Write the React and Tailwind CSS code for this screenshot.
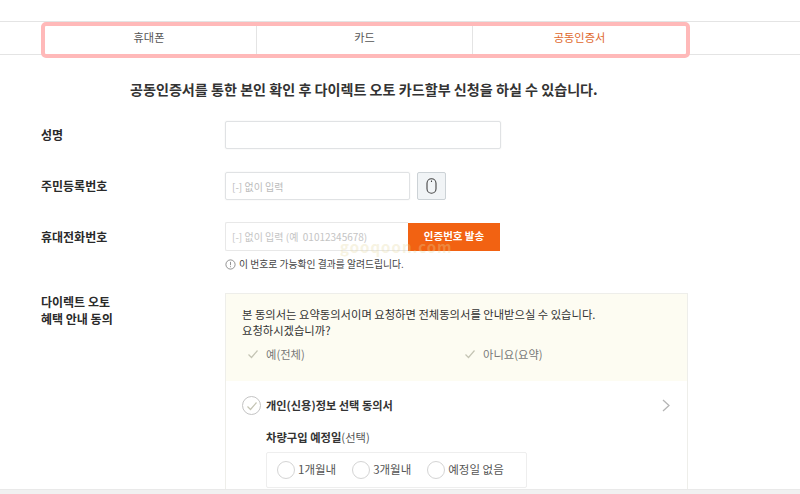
const font = { fontFamily: '"Noto Sans CJK KR", "Noto Sans", sans-serif' };

function Check() {
  return (
    <svg width="12" height="10" viewBox="0 0 12 10" fill="none" stroke="#c4c4b4" strokeWidth="1.2">
      <path d="M1.5 5.5 L4.5 8.5 L10.5 1.5" />
    </svg>
  );
}

function Radio({ label }) {
  return (
    <div className="flex items-center gap-[3px]">
      <span className="w-[18px] h-[18px] rounded-full border border-[#d4d4d4] bg-white" />
      <span className="text-[11.5px] text-[#555] leading-none whitespace-nowrap">{label}</span>
    </div>
  );
}

function Label({ children, className = "" }) {
  return <div className={`w-[184px] shrink-0 text-[12px] font-bold text-[#2a2a2a] ${className}`}>{children}</div>;
}

export default function App() {
  return (
    <div className="relative w-[800px] h-[494px] overflow-hidden bg-white" style={font}>
      <div className="h-[21px]" />
      <div className="relative h-[34px] border-y border-[#e4e4e4]">
        <div className="flex h-full ml-[44px] w-[642px] text-[11.2px] text-[#555] leading-none">
          <div className="w-[213px] flex items-center justify-center border-r border-[#e4e4e4] pr-[2px]">휴대폰</div>
          <div className="w-[216px] flex items-center justify-center border-r border-[#e4e4e4]">카드</div>
          <div className="flex-1 flex items-center justify-center text-[#e0682c]">공동인증서</div>
        </div>
        <div className="absolute left-[41px] top-[0px] w-[649px] h-[36px] border-4 border-[#ffb9b9] rounded-[5px] pointer-events-none" />
      </div>

      <h1 className="mt-[24px] ml-[130px] text-[14.1px] font-bold text-[#333] leading-[20px] whitespace-nowrap">
        공동인증서를 통한 본인 확인 후 다이렉트 오토 카드할부 신청을 하실 수 있습니다.
      </h1>

      <div className="ml-[41px] mt-[22px] flex flex-col">
        <div className="flex items-center h-[28px]">
          <Label>성명</Label>
          <div className="w-[276px] h-full border border-[#e0e2e4] rounded-[2px] bg-white shadow-[0_0_2px_#eeeeee]" />
        </div>

        <div className="flex items-center h-[28px] mt-[23px]">
          <Label>주민등록번호</Label>
          <div className="w-[185px] h-full border border-[#e0e2e4] rounded-[2px] flex items-center pl-[6px] text-[10px] text-[#bbb] shadow-[0_0_2px_#eeeeee]">
            [-] 없이 입력
          </div>
          <button className="ml-[7px] w-[29px] h-full border border-[#ccd2d6] bg-[#f1f4f6] rounded-[2px] flex items-center justify-center">
            <svg width="11" height="16" viewBox="0 0 11 16" fill="none" stroke="#444" strokeWidth="1.1">
              <rect x="1" y="0.8" width="9" height="14.4" rx="4.5" />
              <path d="M5.5 2.5 V4" />
            </svg>
          </button>
        </div>

        <div className="flex items-center h-[29px] mt-[22px]">
          <Label>휴대전화번호</Label>
          <div className="w-[183px] h-full border border-[#e8e8e8] border-r-0 rounded-l-[2px] flex items-center pl-[6px] text-[10px] text-[#c4c4c4] whitespace-nowrap">
            [-] 없이 입력 (예 &nbsp;01012345678)
          </div>
          <button className="w-[92px] h-[28px] bg-[#f26212] text-white text-[10.5px] font-bold flex items-center justify-center leading-none">
            인증번호 발송
          </button>
        </div>

        <div className="flex items-center ml-[184px] mt-[4px] h-[18px] text-[9.8px] text-[#444] whitespace-nowrap">
          <svg className="mr-[3px]" width="11" height="11" viewBox="0 0 11 11" fill="none" stroke="#777" strokeWidth="0.8">
            <circle cx="5.5" cy="5.5" r="4.6" />
            <path d="M5.5 2.8 V6.2 M5.5 7.2 V8.2" />
          </svg>
          이 번호로 가능확인 결과를 알려드립니다.
        </div>

        <div className="flex mt-[20px]">
          <Label className="leading-[17px]">
            다이렉트 오토
            <br />
            혜택 안내 동의
          </Label>
          <div className="w-[463px] h-[210px] border-x border-t border-[#eeeeea] shrink-0">
            <div className="h-[87px] bg-[#fdfcf2] pl-[16px] pt-[12px] text-[11.3px] text-[#333] leading-[16px]">
              <p className="whitespace-nowrap">본 동의서는 요약동의서이며 요청하면 전체동의서를 안내받으실 수 있습니다.</p>
              <p>요청하시겠습니까?</p>
              <div className="flex mt-[8px] text-[#777] ml-[5px]">
                <div className="w-[217px] flex items-center gap-[7px]">
                  <Check />
                  <span>예(전체)</span>
                </div>
                <div className="flex items-center gap-[7px]">
                  <Check />
                  <span>아니요(요약)</span>
                </div>
              </div>
            </div>
            <div className="relative pl-[16px] pt-[15px]">
              <div className="flex items-center gap-[5px]">
                <span className="w-[19px] h-[19px] rounded-full border border-[#c4c4c4] flex items-center justify-center">
                  <Check />
                </span>
                <span className="text-[11.2px] font-bold text-[#333] leading-none whitespace-nowrap">개인(신용)정보 선택 동의서</span>
                <svg className="absolute right-[17px] top-[18px]" width="8" height="13" viewBox="0 0 8 13" fill="none" stroke="#b5b5b5" strokeWidth="1.3">
                  <path d="M1 1 L7 6.5 L1 12" />
                </svg>
              </div>
              <div className="mt-[14px] ml-[24px] text-[11.3px] text-[#555] leading-[16px] whitespace-nowrap">
                <b className="text-[#333]">차량구입 예정일</b>(선택)
              </div>
              <div className="mt-[7px] ml-[24px] w-[261px] h-[36px] border border-[#eeeeee] rounded-[2px] flex items-center gap-[16px] pl-[10px]">
                <Radio label="1개월내" />
                <Radio label="3개월내" />
                <Radio label="예정일 없음" />
              </div>
            </div>
          </div>
        </div>
      </div>

      <div className="absolute left-[340px] top-[239px] text-[15px] font-bold text-[#e6d9a0] opacity-30 leading-none tracking-[1px] whitespace-nowrap pointer-events-none">
        gooqoon.com
      </div>

      <div className="absolute left-0 right-0 bottom-0 h-[5px] bg-[#f1f1f1] border-t border-[#e9e9e9]" />
    </div>
  );
}
